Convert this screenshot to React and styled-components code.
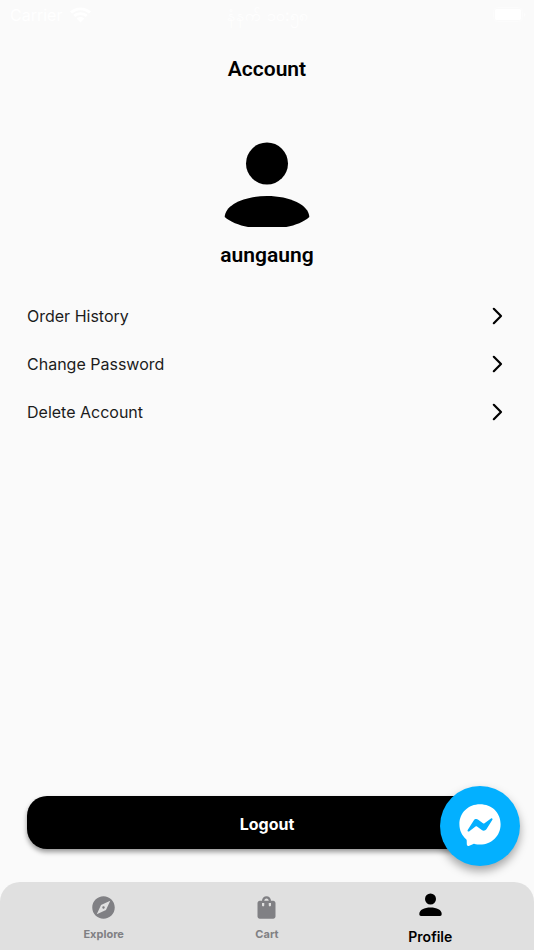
import React, { useState } from 'react';
import styled, { createGlobalStyle } from 'styled-components';
import { MdExplore, MdShoppingBag } from 'react-icons/md';

const GlobalStyle = createGlobalStyle`
	* {
		box-sizing: border-box;
	}
	body {
		margin: 0;
		background: #fafafa;
		color: #000;
		font-family: Inter, Roboto, sans-serif;
	}
`;

const Page = styled.div`
	display: flex;
	flex-direction: column;
	min-height: 100vh;
`;

const StatusBar = styled.header`
	display: grid;
	grid-template-columns: 1fr auto 1fr;
	align-items: center;
	height: 30px;
	padding: 0 8px 0 10px;
	color: #fff;
	font-size: 16px;
	line-height: 20px;
`;

const StatusGroup = styled.div`
	display: flex;
	align-items: center;
	justify-content: ${({ $end }) => ($end ? 'flex-end' : 'flex-start')};
	gap: 8px;
`;

const Content = styled.main`
	display: flex;
	flex: 1;
	flex-direction: column;
	padding: 24px 27px 33px;
`;

const Title = styled.h1`
	margin: 0;
	font: 600 21px/30px Roboto, sans-serif;
	text-align: center;
`;

const UserCard = styled.section`
	display: flex;
	flex-direction: column;
	align-items: center;
	gap: 12px;
	padding: 58px 0 22px;
`;

const UserName = styled.h2`
	margin: 0;
	font: 600 21px/30px Roboto, sans-serif;
`;

const MenuList = styled.ul`
	margin: 0;
	padding: 0;
	list-style: none;
`;

const MenuLink = styled.a`
	display: flex;
	align-items: center;
	justify-content: space-between;
	height: 48px;
	padding-right: 4px;
	color: #1c1c1c;
	font-size: 16px;
	text-decoration: none;
`;

const LogoutButton = styled.button`
	height: 53px;
	margin-top: auto;
	padding: 2px 0 0;
	border: 0;
	border-radius: 20px;
	background: #000;
	box-shadow: 0 3px 5px rgba(0, 0, 0, 0.4);
	color: #fff;
	font: 700 16px/20px Inter, sans-serif;
	cursor: pointer;
`;

const ChatButton = styled.button`
	position: fixed;
	right: 14px;
	bottom: 84px;
	display: flex;
	align-items: center;
	justify-content: center;
	width: 80px;
	height: 80px;
	padding: 0;
	border: 0;
	border-radius: 50%;
	background: #03b0ff;
	box-shadow: 0 5px 10px rgba(0, 0, 0, 0.35);
	cursor: pointer;
`;

const TabBar = styled.nav`
	display: grid;
	grid-template-columns: repeat(3, 1fr);
	height: 68px;
	padding: 0 22px;
	border-radius: 20px 20px 0 0;
	background: #e0e0e0;
`;

const Tab = styled.button`
	display: flex;
	flex-direction: column;
	align-items: center;
	gap: ${({ $active }) => ($active ? '12px' : '5px')};
	padding: ${({ $active }) => ($active ? '11px' : '12px')} 0 0;
	border: 0;
	background: none;
	color: ${({ $active }) => ($active ? '#000' : '#808084')};
	font: ${({ $active }) => ($active ? '600 14px' : '700 11px')}/16px Inter, sans-serif;
	cursor: pointer;
`;

const menuItems = [
	{ label: 'Order History', href: '#orders' },
	{ label: 'Change Password', href: '#password' },
	{ label: 'Delete Account', href: '#delete' },
];

function WifiIcon() {
	return (
		<svg width="21" height="16" viewBox="0 0 21 16" fill="#fff" aria-hidden="true">
			<path d="M0 4.5C6-1 15-1 21 4.5l-2 2.1c-5-4.5-12-4.5-17 0z" />
			<path d="M3.3 8c4-3.8 10.400-3.800 14.400 0l-2 2.100c-3-2.700-7.400-2.700-10.400 0z" />
			<path d="M6.700 11.500c2.200-2 5.400-2 7.600 0L10.500 15.500z" />
		</svg>
	);
}

function BatteryIcon() {
	return (
		<svg width="33" height="16" viewBox="0 0 33 16" fill="#fff" aria-hidden="true">
			<rect x="0.500" y="0.500" width="29" height="14" rx="4" fill="none" stroke="#fff" strokeOpacity="0.400" />
			<rect x="2" y="2" width="26" height="11" rx="2" />
			<path d="M31 5.500c2 1 2 3.500 0 4.500z" fillOpacity="0.500" />
		</svg>
	);
}

function AvatarIcon() {
	return (
		<svg width="86" height="86" viewBox="0 0 86 86" aria-hidden="true">
			<circle cx="43" cy="21.500" r="21" />
			<path d="M.7 75C1 63 20 54 43 54s42 9 42.300 21c-5 4.500-14 8.500-23 10H24C15 83.500 6 79.500.7 75z" />
		</svg>
	);
}

function ProfileIcon() {
	return (
		<svg width="24" height="24" viewBox="0 0 24 24" aria-hidden="true">
			<circle cx="12.500" cy="6" r="5.500" />
			<path d="M1.300 21c0-4.300 5-6.500 11.200-6.500s11.200 2.200 11.200 6.500c0 1.300-.6 2-1.700 2H3c-1.100 0-1.700-.7-1.700-2z" />
		</svg>
	);
}

function ChevronIcon() {
	return (
		<svg width="12" height="18" viewBox="0 0 12 18" aria-hidden="true">
			<path
				d="M2.800 1.800L10 9l-7.200 7.200"
				fill="none"
				stroke="#000"
				strokeWidth="2.200"
				strokeLinecap="round"
				strokeLinejoin="round"
			/>
		</svg>
	);
}

function MessengerIcon() {
	return (
		<svg width="42" height="44" viewBox="0 0 42 44" aria-hidden="true">
			<path
				d="M21 .3C9.300.3.400 8.800.400 20.300c0 6 2.500 11.200 6.700 14.900.4.300.6.800.6 1.300l.1 3.700c.1 1.400 1.300 2.200 2.500 1.600l4.100-1.800c.4-.2.800-.2 1.200-.1 1.700.5 3.500.7 5.400.7 11.700 0 20.600-8.600 20.600-20.300S32.700.3 21 .3z"
				fill="#fff"
			/>
			<path
				d="M8.700 26.100l6-9.600c1-1.600 3-1.900 4.500-.8l4.800 3.600c.4.300 1 .3 1.500 0l6.500-4.900c.9-.7 2 .4 1.400 1.300l-6 9.600c-1 1.500-3.100 1.900-4.600.8L18 22.500c-.4-.3-1-.3-1.500 0L10 27.400c-.8.700-1.900-.4-1.300-1.300z"
				fill="#03b0ff"
			/>
		</svg>
	);
}

const tabs = [
	{ id: 'explore', label: 'Explore', icon: <MdExplore size={27} /> },
	{ id: 'cart', label: 'Cart', icon: <MdShoppingBag size={27} /> },
	{ id: 'profile', label: 'Profile', icon: <ProfileIcon /> },
];

function App() {
	const [activeTab, setActiveTab] = useState('profile');

	return (
		<Page>
			<GlobalStyle />
			<StatusBar>
				<StatusGroup>
					<span>Carrier</span>
					<WifiIcon />
				</StatusGroup>
				<span>နံနက် ၁၀:၅၈</span>
				<StatusGroup $end>
					<BatteryIcon />
				</StatusGroup>
			</StatusBar>
			<Content>
				<Title>Account</Title>
				<UserCard>
					<AvatarIcon />
					<UserName>aungaung</UserName>
				</UserCard>
				<MenuList>
					{menuItems.map((item) => (
						<li key={item.label}>
							<MenuLink href={item.href}>
								{item.label}
								<ChevronIcon />
							</MenuLink>
						</li>
					))}
				</MenuList>
				<LogoutButton type="button">Logout</LogoutButton>
			</Content>
			<TabBar>
				{tabs.map((tab) => (
					<Tab
						key={tab.id}
						type="button"
						$active={tab.id === activeTab}
						onClick={() => setActiveTab(tab.id)}
					>
						{tab.icon}
						{tab.label}
					</Tab>
				))}
			</TabBar>
			<ChatButton type="button" aria-label="Chat on Messenger">
				<MessengerIcon />
			</ChatButton>
		</Page>
	);
}

export default App;
